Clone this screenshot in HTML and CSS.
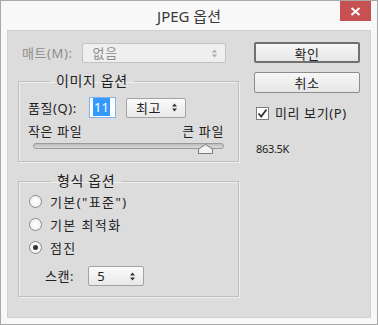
FILE: index.html
```html
<!DOCTYPE html>
<html lang="ko">
<head>
    <meta charset="UTF-8">
    <title>JPEG 옵션</title>
    <link rel="stylesheet" href="styles.css">
</head>
<body>

<div class="window">
    <div class="titlebar">
        <span></span>
        <span class="title">JPEG 옵션</span>
        <button class="close" type="button">
            <svg width="11" height="9" viewBox="0 0 11 9"><path d="M1.5 1 L9.5 8 M9.5 1 L1.5 8" stroke="#fff" stroke-width="2"/></svg>
        </button>
    </div>

    <div class="panel">
        <div class="left">
            <div class="mat-row">
                <span class="label disabled">매트(M):</span>
                <div class="select select-mat disabled">
                    <span>없음</span>
                    <svg class="spin" width="7" height="9" viewBox="0 0 7 9"><path d="M3.5 0.5 L6 3.5 H1 Z M3.5 8.5 L6 5.5 H1 Z" fill="#aaa"/></svg>
                </div>
            </div>

            <fieldset class="group group-image">
                <legend>이미지 옵션</legend>
                <div class="quality-row">
                    <span class="label">품질(Q):</span>
                    <div class="num-input"><span class="sel">11</span></div>
                    <div class="select select-quality">
                        <span>최고</span>
                        <svg class="spin" width="7" height="9" viewBox="0 0 7 9"><path d="M3.5 0.5 L6 3.5 H1 Z M3.5 8.5 L6 5.5 H1 Z" fill="#333"/></svg>
                    </div>
                </div>
                <div class="size-labels">
                    <span>작은 파일</span>
                    <span>큰 파일</span>
                </div>
                <div class="slider">
                    <div class="track"></div>
                    <svg class="thumb" width="15" height="10" viewBox="0 0 15 10"><path d="M0.5 9.5 V5 L7.5 0.5 L14.5 5 V9.5 Z" fill="#f2f2f2" stroke="#7a7a7a"/></svg>
                </div>
            </fieldset>

            <fieldset class="group group-format">
                <legend>형식 옵션</legend>
                <label class="radio-row"><span class="radio"></span>기본("표준")</label>
                <label class="radio-row"><span class="radio"></span>기본 최적화</label>
                <label class="radio-row"><span class="radio checked"></span>점진</label>
                <div class="scan-row">
                    <span class="label">스캔:</span>
                    <div class="select select-scan">
                        <span>5</span>
                        <svg class="spin" width="7" height="9" viewBox="0 0 7 9"><path d="M3.5 0.5 L6 3.5 H1 Z M3.5 8.5 L6 5.5 H1 Z" fill="#333"/></svg>
                    </div>
                </div>
            </fieldset>
        </div>

        <div class="right">
            <button class="btn btn-default" type="button">확인</button>
            <button class="btn" type="button">취소</button>
            <label class="check-row">
                <span class="checkbox">
                    <svg width="11" height="11" viewBox="0 0 11 11"><path d="M1.5 5.5 L4.2 8.5 L9.5 1.5" fill="none" stroke="#333" stroke-width="1.8"/></svg>
                </span>
                미리 보기(P)
            </label>
            <div class="filesize">863.5K</div>
        </div>
    </div>
</div>

</body>
</html>
```

FILE: styles.css
```css
body {
    margin: 0;
    font-family: "Noto Sans", "Noto Sans CJK KR", sans-serif;
    font-size: 13px;
    line-height: 16px;
    letter-spacing: 0.6px;
    color: #222;
    background: #fff;
}
.window {
    width: 376px;
    height: 323px;
    border: 1px solid #a9a9a9;
    background: #f8f8f8;
}
.titlebar {
    display: grid;
    grid-template-columns: 1fr auto 1fr;
    align-items: start;
    height: 29px;
    padding-right: 6px;
}
.title {
    font-size: 15px;
    line-height: 18px;
    letter-spacing: 0;
    padding-top: 6px;
    color: #3a3a3a;
    padding-left: 6px;
}
.close {
    justify-self: end;
    width: 31px;
    height: 20px;
    padding: 0;
    border: none;
    background: #c75050;
    display: flex;
    align-items: center;
    justify-content: center;
}
.panel {
    display: flex;
    margin-left: 6px;
    width: 362px;
    height: 286px;
    border: 1px solid #d0d0d0;
    background: #dcdcdc;
}
.left {
    width: 221px;
    margin-left: 10px;
}
.mat-row {
    display: flex;
    align-items: center;
    height: 20px;
    margin-top: 12px;
    padding-left: 4px;
}
.label {
    white-space: nowrap;
}
.disabled {
    color: #8d8d8d;
}
.select {
    display: flex;
    align-items: center;
    justify-content: space-between;
    box-sizing: border-box;
    height: 20px;
    padding: 0 7px 0 10px;
    border: 1px solid #a3a3a3;
    border-radius: 2px;
    background: linear-gradient(#fafafa, #e8e8e8);
}
.select.disabled {
    border-color: #c2c2c2;
    background: #efefef;
}
.select-mat {
    width: 144px;
    margin-left: 9px;
}
.group {
    margin: 0;
    padding: 0;
    border: 1px solid #bfbfbf;
    box-shadow: inset 1px 1px 0 #efefef, 1px 1px 0 #efefef;
}
.group legend {
    margin-left: 22px;
    padding: 0 6px;
    font-size: 14px;
}
.group-image {
    margin-top: 10px;
    height: 89px;
    box-sizing: border-box;
    padding: 8px 14px 0 9px;
}
.quality-row {
    display: flex;
    align-items: center;
    height: 21px;
}
.num-input {
    box-sizing: border-box;
    width: 27px;
    height: 21px;
    margin-left: 12px;
    padding: 2px 0 0 3px;
    border: 1px solid #7eb4ea;
    background: #fff;
    line-height: 15px;
    letter-spacing: 0;
}
.sel {
    background: #3399ff;
    color: #fff;
    padding: 0 1px;
}
.select-quality {
    width: 60px;
    margin-left: 10px;
    padding-left: 9px;
}
.size-labels {
    display: flex;
    justify-content: space-between;
    margin-top: 5px;
}
.slider {
    position: relative;
    height: 12px;
    margin: 1px 0 0 5px;
}
.track {
    height: 4px;
    margin-top: 4px;
    border: 1px solid #9a9a9a;
    border-radius: 3px;
    background: linear-gradient(#bdbdbd, #dadada);
}
.thumb {
    position: absolute;
    left: 165px;
    top: 1px;
}
.group-format {
    margin-top: 11px;
    height: 124px;
    box-sizing: border-box;
    padding: 1px 0 0 10px;
}
.radio-row {
    display: flex;
    align-items: center;
    gap: 8px;
    height: 23px;
    letter-spacing: 1.4px;
}
.radio {
    box-sizing: border-box;
    width: 13px;
    height: 13px;
    border: 1px solid #8a8a8a;
    border-radius: 50%;
    background: radial-gradient(#fff, #ececec);
    display: flex;
    align-items: center;
    justify-content: center;
}
.radio.checked::after {
    content: "";
    width: 5px;
    height: 5px;
    border-radius: 50%;
    background: #333;
}
.scan-row {
    display: flex;
    align-items: center;
    margin-top: 7px;
    padding-left: 16px;
}
.select-scan {
    width: 56px;
    margin-left: 14px;
    padding-left: 8px;
}
.right {
    width: 106px;
    margin-left: 15px;
    padding-top: 11px;
}
.btn {
    display: block;
    box-sizing: border-box;
    width: 106px;
    height: 21px;
    padding: 0;
    font-family: inherit;
    font-size: 13px;
    letter-spacing: 0.6px;
    color: #222;
    border: 1px solid #8c8c8c;
    border-radius: 2px;
    background: linear-gradient(#f7f7f7, #e6e6e6);
}
.btn + .btn {
    margin-top: 9px;
}
.btn-default {
    border: 2px solid #707070;
}
.check-row {
    display: flex;
    align-items: center;
    gap: 6px;
    margin-top: 12px;
    padding-left: 2px;
}
.checkbox {
    box-sizing: border-box;
    width: 13px;
    height: 13px;
    border: 1px solid #7d7d7d;
    background: #fff;
    display: flex;
    align-items: center;
    justify-content: center;
}
.filesize {
    margin-top: 20px;
    padding-left: 2px;
    font-size: 11px;
    letter-spacing: -0.3px;
}
```
